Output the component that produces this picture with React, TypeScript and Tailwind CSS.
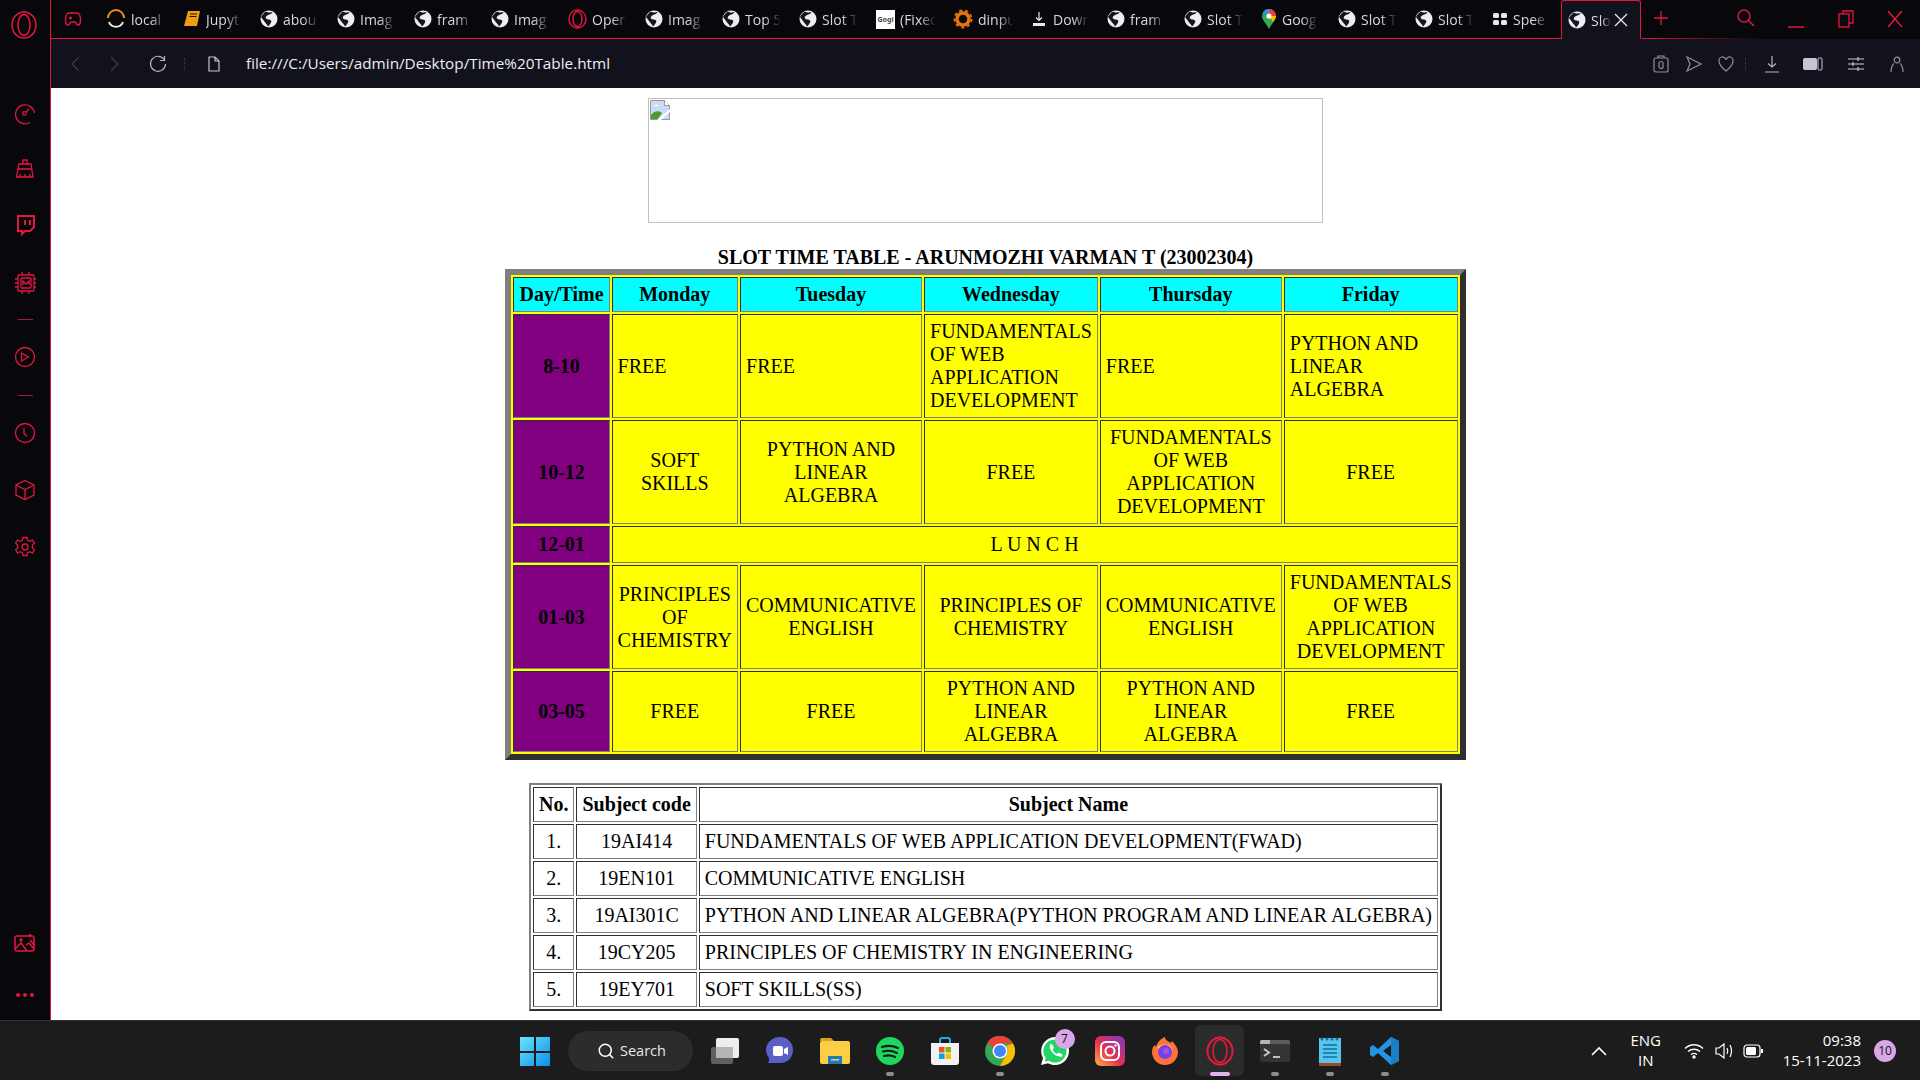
import React from 'react';
import { Search } from 'lucide-react';

const RED = '#e3173e';

const serif = "font-['Liberation_Serif','Times_New_Roman',serif] text-[20px] leading-[23px] text-black";
const ui = "font-['Open_Sans','Noto_Sans',sans-serif]";
const fade = '[mask-image:linear-gradient(to_right,black_55%,transparent)]';

const Globe = () => <svg width="18" height="18" viewBox="0 0 18 18" className="shrink-0">
    <circle cx="9" cy="9" r="8.5" fill="#eceef2" />
    <path d="M6 1.5c2 1.5 5 1 6.5.5-.5 2-3 2-4.5 3S5 7 6 8.5s4 .5 5 2-1 4-3 6C7 14 5 13 4 11S1.5 8 1 7c1-2 3-4.5 5-5.500z" fill="#14141c" />
</svg>;

const tabs: { icon: string, label: string }[] = [
    { icon: 'local', label: 'local' },
    { icon: 'jupyter', label: 'Jupyt' },
    { icon: 'globe', label: 'abou' },
    { icon: 'globe', label: 'Imag' },
    { icon: 'globe', label: 'fram' },
    { icon: 'globe', label: 'Imag' },
    { icon: 'opera', label: 'Oper' },
    { icon: 'globe', label: 'Imag' },
    { icon: 'globe', label: 'Top 5' },
    { icon: 'globe', label: 'Slot T' },
    { icon: 'gogi', label: '(Fixed' },
    { icon: 'gear', label: 'dinpu' },
    { icon: 'down', label: 'Dowr' },
    { icon: 'globe', label: 'fram' },
    { icon: 'globe', label: 'Slot T' },
    { icon: 'maps', label: 'Goog' },
    { icon: 'globe', label: 'Slot T' },
    { icon: 'globe', label: 'Slot T' },
    { icon: 'speed', label: 'Spee' },
];

const TabIcon = ({ icon }: { icon: string }) => {
    switch (icon) {
        case 'local':
            return <svg width="20" height="20" viewBox="0 0 20 20" fill="none" stroke="#f08a24" strokeWidth="2" className="shrink-0"><path d="M2 9a8 8 0 0 1 16 0" /><path d="M3 13a7.5 7.5 0 0 0 14 0" stroke="#e8e8e8" /></svg>;
        case 'jupyter':
            return <svg width="18" height="18" viewBox="0 0 18 18" className="shrink-0"><path d="M5 1h12l-3 15H1z" fill="#f39c12" /><path d="M7 4h7M6.500 6.500h7" stroke="#141414" strokeWidth="1" /></svg>;
        case 'opera':
            return <svg width="19" height="20" viewBox="0 0 19 20" fill="none" stroke={RED} strokeWidth="1.400" className="shrink-0"><ellipse cx="9.500" cy="10" rx="8.500" ry="9" /><ellipse cx="9.500" cy="10" rx="4.500" ry="7.500" /></svg>;
        case 'gogi':
            return <div className="w-[19px] h-[19px] bg-white text-[7px] leading-[7px] text-center text-[#444] font-bold flex items-center justify-center shrink-0">Gogi</div>;
        case 'gear':
            return <svg width="20" height="20" viewBox="0 0 20 20" fill="none" className="shrink-0"><circle cx="10" cy="10" r="6" stroke="#e8720c" strokeWidth="3.500" /><circle cx="10" cy="10" r="8.500" stroke="#e8720c" strokeWidth="2" strokeDasharray="3 3" /></svg>;
        case 'down':
            return <svg width="18" height="18" viewBox="0 0 18 18" fill="none" stroke="#e8e8ec" strokeWidth="1.200" className="shrink-0"><path d="M9 2v8M6 7.500 9 10.500l3-3" /><path d="M3 14.500h12" strokeWidth="3" /></svg>;
        case 'maps':
            return <svg width="16" height="20" viewBox="0 0 16 20" className="shrink-0"><path d="M8 0a7 7 0 0 1 7 7c0 4-4 7-7 13C5 14 1 11 1 7a7 7 0 0 1 7-7z" fill="#34a853" /><path d="M2 3a7 7 0 0 1 6-3v7z" fill="#4285f4" /><path d="M8 0a7 7 0 0 1 7 7H8z" fill="#ea4335" /><path d="M15 7c0 2-1.500 4-3 6L8 7z" fill="#fbbc04" /><circle cx="8" cy="7" r="2.600" fill="#fff" /></svg>;
        case 'speed':
            return <svg width="16" height="16" viewBox="0 0 16 16" fill="#e8e8ec" className="shrink-0"><rect x="1" y="2" width="6" height="5" rx="1.500" /><rect x="9" y="2" width="6" height="5" rx="1.500" /><rect x="1" y="9" width="6" height="5" rx="1.500" /><rect x="9" y="9" width="6" height="5" rx="1.500" /></svg>;
        default:
            return <Globe />;
    }
};

const Tab = ({ icon, label }: { icon: string, label: string }) => <div className="w-[77px] h-[38px] shrink-0 flex items-center gap-[5px] pl-[4px]">
    <TabIcon icon={icon} />
    <div className={`${ui} ${fade} text-[14px] text-[#d8d8dc] w-[36px] whitespace-nowrap`}>{label}</div>
</div>;

const railIcon = { width: 24, height: 24, viewBox: '0 0 24 24', fill: 'none', stroke: RED, strokeWidth: 1.300 };

const Rail = () => <div className="w-[51px] shrink-0 flex flex-col items-center bg-[#07070c] border-r border-[#e3173e]">
    <svg width="30" height="32" viewBox="0 0 30 32" fill="none" stroke={RED} strokeWidth="1.500" className="mt-[9px]"><ellipse cx="14" cy="16" rx="12" ry="13" /><ellipse cx="14" cy="16" rx="6" ry="10.500" /></svg>
    <div className="mt-[60px] flex flex-col items-center">
        <svg {...railIcon}><path d="M17 21.500A9.500 9.500 0 1 1 21.500 12" /><circle cx="11.500" cy="12.500" r="1.800" /><path d="M13 11l3-3" /><path d="M21 15v.01M20 18v.01" /></svg>
        <svg {...railIcon} className="mt-[32px]"><path d="M10 7V3h4v4M6 7h12l2 13H3.500z" /><path d="M7 20v-3M12 20v-3M17 20v-3M5 12h14" /></svg>
        <svg {...railIcon} strokeWidth={2} className="mt-[32px]"><path d="M5 3h16v11l-4 4h-5l-3 3v-3H5z" /><path d="M12 7v5M17 7v5" /></svg>
        <svg {...railIcon} className="mt-[34px]"><rect x="5" y="4" width="16" height="16" rx="1" /><rect x="8" y="7" width="10" height="10" rx="1" /><path d="M10 14v-4l3 3 3-3v4M2 8h3M2 12h3M2 16h3M21 8h2M21 12h2M21 16h2M9 1v3M16 1v3M9 20v3M16 20v3" /></svg>
        <div className="w-[15px] h-px bg-[#b5143a] mt-[24px]" />
        <svg {...railIcon} className="mt-[25px]"><circle cx="12" cy="12" r="9.500" /><path d="M8.500 8l7 4-7 4z" /></svg>
        <div className="w-[15px] h-px bg-[#b5143a] mt-[26px]" />
        <svg {...railIcon} className="mt-[25px]"><circle cx="12" cy="12" r="9.500" /><path d="M11 7v5.500l3 3" /></svg>
        <svg {...railIcon} className="mt-[33px]"><path d="M12 2.500l9 4.500v10l-9 4.500L3 17V7zM3 7l9 4.500L21 7M12 11.500v10" /></svg>
        <svg {...railIcon} className="mt-[33px]"><circle cx="12" cy="12" r="3" /><path d="M10 2.500h4l.6 2.800 2.300 1 2.500-1.500 2 3.400-2 1.900v2.800l2 1.900-2 3.400-2.500-1.500-2.300 1-.6 2.800h-4l-.6-2.800-2.300-1-2.500 1.500-2-3.400 2-1.900v-2.800l-2-1.900 2-3.400 2.500 1.500 2.300-1z" /></svg>
    </div>
    <div className="mt-auto mb-[23px] flex flex-col items-center">
        <svg {...railIcon} strokeWidth={1.500}><rect x="2" y="5" width="19" height="15" rx="2" /><circle cx="8" cy="9" r="1" fill={RED} /><path d="M2 18l6-6 6 8M13 14l3-2 5 6M17 9l5 6M17 3v3M15.500 4.500h3" /></svg>
        <div className="flex gap-[3px] mt-[38px]">
            <div className="w-[4px] h-[4px] rounded-full bg-[#e3173e]" />
            <div className="w-[4px] h-[4px] rounded-full bg-[#e3173e]" />
            <div className="w-[4px] h-[4px] rounded-full bg-[#e3173e]" />
        </div>
    </div>
</div>;

const TabStrip = () => <div className="h-[39px] shrink-0 flex items-start bg-[#07070c] relative">
    <div className="w-[51px] h-[38px] shrink-0 flex items-center pl-[13px]">
        <svg width="18" height="18" viewBox="0 0 18 18" fill="none" stroke={RED} strokeWidth="1.500"><path d="M5 3h8c2 0 3.500 3 3.500 7 0 3-1 5-2.500 5s-2-3-3-3H7c-1 0-1.500 3-3 3s-2.500-2-2.500-5c0-4 1.500-7 3.500-7z" /><path d="M5 8h3M6.500 6.500v3" /></svg>
    </div>
    {tabs.map((t, i) => <Tab key={i} icon={t.icon} label={t.label} />)}
    <div className="w-[80px] h-[39px] -ml-[4px] shrink-0 bg-[#12121c] border-t border-x border-[#e3173e] rounded-t-[3px] flex items-center pl-[6px] relative z-10">
        <Globe />
        <div className={`${ui} ${fade} text-[14px] text-[#d8d8dc] w-[20px] ml-[5px] mr-[3px]`}>Slo</div>
        <svg width="14" height="14" viewBox="0 0 14 14" stroke="#e8e8ec" strokeWidth="1.300"><path d="M1 1l12 12M13 1L1 13" /></svg>
    </div>
    <svg width="16" height="16" viewBox="0 0 16 16" stroke={RED} strokeWidth="1.300" className="ml-[12px] mt-[10px] shrink-0"><path d="M8 1v14M1 8h14" /></svg>
    <div className="ml-auto flex items-start">
        <svg width="20" height="20" viewBox="0 0 20 20" fill="none" stroke={RED} strokeWidth="1.500" className="mt-[8px]"><circle cx="8" cy="8" r="6" /><path d="M12.500 12.500 18 18" /></svg>
        <svg width="16" height="16" viewBox="0 0 16 16" stroke={RED} strokeWidth="1.500" className="ml-[32px] mt-[12px]"><path d="M0 15h16" /></svg>
        <svg width="16" height="18" viewBox="0 0 16 18" fill="none" stroke={RED} strokeWidth="1.300" className="ml-[34px] mt-[10px]"><rect x="1" y="4" width="10" height="13" /><path d="M5 4V1h10v12h-4" /></svg>
        <svg width="18" height="18" viewBox="0 0 18 18" stroke={RED} strokeWidth="1.500" className="ml-[32px] mr-[16px] mt-[10px]"><path d="M2 1l14 16M16 1L2 17" /></svg>
    </div>
    <div className="absolute left-0 w-[1512px] bottom-0 h-px bg-[#e3173e]" />
    <div className="absolute left-[1591px] w-[120px] bottom-0 h-px bg-gradient-to-r from-[#e3173e] to-transparent" />
</div>;

const toolIcon = { fill: 'none', stroke: '#8f8f9e', strokeWidth: 1.200 };

const AddressBar = () => <div className="h-[49px] shrink-0 bg-[#12121c] flex items-center">
    <svg width="10" height="16" viewBox="0 0 10 16" {...toolIcon} stroke="#3d3d49" className="ml-[19px]"><path d="M9 1 2 8l7 7" /></svg>
    <svg width="10" height="16" viewBox="0 0 10 16" {...toolIcon} stroke="#3d3d49" className="ml-[30px]"><path d="M1 1l7 7-7 7" /></svg>
    <svg width="18" height="18" viewBox="0 0 18 18" {...toolIcon} stroke="#b5b5c0" className="ml-[29px]"><path d="M15.500 5A7.500 7.500 0 1 0 16.500 9M15.500 1v4.500H11" /></svg>
    <div className="w-px h-[12px] ml-[17px] border-l border-dotted border-[#3d3d49]" />
    <svg width="14" height="16" viewBox="0 0 14 16" {...toolIcon} stroke="#c5c5ce" className="ml-[22px]"><path d="M2 1h6l4 4v10H2zM8 1v4h4" /></svg>
    <div className={`${ui} text-[15.3px] text-[#eeeef2] ml-[25px] whitespace-nowrap`}>file:///C:/Users/admin/Desktop/Time%20Table.html</div>
    <div className="ml-auto flex items-center">
        <svg width="18" height="20" viewBox="0 0 18 20" {...toolIcon}><rect x="2" y="4" width="14" height="14" rx="2" /><path d="M6 4V2h6v2" /><rect x="7" y="7.500" width="4" height="7" rx="2" /></svg>
        <svg width="18" height="18" viewBox="0 0 18 18" {...toolIcon} className="ml-[15px]"><path d="M2 2l14 7-14 7 3-7z" /></svg>
        <svg width="18" height="18" viewBox="0 0 18 18" {...toolIcon} className="ml-[14px]"><path d="M9 16C4 12 2 9 2 6a3.500 3.500 0 0 1 7-1 3.500 3.500 0 0 1 7 1c0 3-2 6-7 10z" /></svg>
        <div className="w-px h-[12px] ml-[10px] border-l border-dotted border-[#3d3d49]" />
        <svg width="18" height="20" viewBox="0 0 18 20" {...toolIcon} stroke="#b5b5c0" className="ml-[17px]"><path d="M9 2v11M5 9.500 9 13l4-3.500M2 18h14" /></svg>
        <svg width="20" height="14" viewBox="0 0 20 14" className="ml-[22px]"><rect x="0" y="1" width="14" height="12" rx="2" fill="#c9c5d6" /><rect x="15" y="1" width="4" height="12" rx="1" fill="none" stroke="#c9c5d6" /></svg>
        <svg width="18" height="18" viewBox="0 0 18 18" {...toolIcon} stroke="#c9c9d2" className="ml-[24px]"><path d="M1 4h16M1 9h16M1 14h16M11 2v4M6 7v4M11 12v4" /></svg>
        <svg width="14" height="18" viewBox="0 0 14 18" {...toolIcon} className="ml-[25px] mr-[16px]"><circle cx="7" cy="5" r="2.800" /><path d="M1 17c0-5 2-8 3-8.500M13 17c0-5-2-8-3-8.500" /></svg>
    </div>
</div>;

const cellBorder = 'border border-t-[#303030] border-l-[#303030] border-b-[#808080] border-r-[#808080] p-[5px]';

const Th = ({ children }: { children: React.ReactNode }) => <th className={`${cellBorder} ${serif} font-bold bg-[#00ffff]`}>{children}</th>;

const Slot = ({ children, left }: { children: React.ReactNode, left?: boolean }) => <td className={`${cellBorder} ${serif} bg-[#ffff00] ${left ? 'text-left' : 'text-center'}`}>{children}</td>;

const Time = ({ children }: { children: string }) => <td className={`${cellBorder} ${serif} font-bold bg-[#800080] text-center`}>{children}</td>;

const SlotTable = () => <table className="mx-auto border-separate border-spacing-[2px] bg-[#ffff00] border-[6px] border-t-[#808080] border-l-[#808080] border-b-[#2f2f2f] border-r-[#2f2f2f]">
    <tbody>
        <tr>
            <Th>Day/Time</Th><Th>Monday</Th><Th>Tuesday</Th><Th>Wednesday</Th><Th>Thursday</Th><Th>Friday</Th>
        </tr>
        <tr>
            <Time>8-10</Time>
            <Slot left>FREE</Slot>
            <Slot left>FREE</Slot>
            <Slot left>FUNDAMENTALS<br />OF WEB<br />APPLICATION<br />DEVELOPMENT</Slot>
            <Slot left>FREE</Slot>
            <Slot left>PYTHON AND<br />LINEAR<br />ALGEBRA</Slot>
        </tr>
        <tr>
            <Time>10-12</Time>
            <Slot>SOFT<br />SKILLS</Slot>
            <Slot>PYTHON AND<br />LINEAR<br />ALGEBRA</Slot>
            <Slot>FREE</Slot>
            <Slot>FUNDAMENTALS<br />OF WEB<br />APPLICATION<br />DEVELOPMENT</Slot>
            <Slot>FREE</Slot>
        </tr>
        <tr className="h-[37px]">
            <Time>12-01</Time>
            <td colSpan={5} className={`${cellBorder} ${serif} bg-[#ffff00] text-center`}>L U N C H</td>
        </tr>
        <tr>
            <Time>01-03</Time>
            <Slot>PRINCIPLES<br />OF<br />CHEMISTRY</Slot>
            <Slot>COMMUNICATIVE<br />ENGLISH</Slot>
            <Slot>PRINCIPLES OF<br />CHEMISTRY</Slot>
            <Slot>COMMUNICATIVE<br />ENGLISH</Slot>
            <Slot>FUNDAMENTALS<br />OF WEB<br />APPLICATION<br />DEVELOPMENT</Slot>
        </tr>
        <tr>
            <Time>03-05</Time>
            <Slot>FREE</Slot>
            <Slot>FREE</Slot>
            <Slot>PYTHON AND<br />LINEAR<br />ALGEBRA</Slot>
            <Slot>PYTHON AND<br />LINEAR<br />ALGEBRA</Slot>
            <Slot>FREE</Slot>
        </tr>
    </tbody>
</table>;

const subjects = [
    ['1.', '19AI414', 'FUNDAMENTALS OF WEB APPLICATION DEVELOPMENT(FWAD)'],
    ['2.', '19EN101', 'COMMUNICATIVE ENGLISH'],
    ['3.', '19AI301C', 'PYTHON AND LINEAR ALGEBRA(PYTHON PROGRAM AND LINEAR ALGEBRA)'],
    ['4.', '19CY205', 'PRINCIPLES OF CHEMISTRY IN ENGINEERING'],
    ['5.', '19EY701', 'SOFT SKILLS(SS)'],
];

const SubjectTable = () => <table className="mx-auto mt-[23px] border-separate border-spacing-[2px] border-2 border-t-[#808080] border-l-[#808080] border-b-[#2f2f2f] border-r-[#2f2f2f]">
    <tbody>
        <tr>
            <th className={`${cellBorder} ${serif} font-bold`}>No.</th>
            <th className={`${cellBorder} ${serif} font-bold`}>Subject code</th>
            <th className={`${cellBorder} ${serif} font-bold`}>Subject Name</th>
        </tr>
        { subjects.map(row => <tr key={row[0]}>
            <td className={`${cellBorder} ${serif} text-center`}>{row[0]}</td>
            <td className={`${cellBorder} ${serif} text-center`}>{row[1]}</td>
            <td className={`${cellBorder} ${serif}`}>{row[2]}</td>
        </tr> )}
    </tbody>
</table>;

const Page = () => <div className="flex-1 bg-white overflow-hidden">
    <div className="w-[675px] h-[125px] mx-auto mt-[10px] border border-[#c0c0c0] p-[1px]">
        <svg width="20" height="20" viewBox="0 0 20 20" className="block">
            <path d="M.5.5h14l5 5v14H.5z" fill="#c9dcf6" stroke="#9a9a9a" />
            <path d="M14.5.5v5h5" fill="#fff" stroke="#9a9a9a" />
            <path d="M4 6c1-2 4-2 5 0z" fill="#fff" />
            <path d="M1 19v-4c3-4 7-5 11-2l-4 6z" fill="#4f9a2e" />
            <path d="M7 20 20 9v3L11 20z" fill="#fff" />
        </svg>
    </div>
    <div className={`${serif} font-bold text-center mt-[23px]`}>SLOT TIME TABLE - ARUNMOZHI VARMAN T (23002304)</div>
    <SlotTable />
    <SubjectTable />
</div>;

const Dot = () => <div className="absolute left-1/2 -translate-x-1/2 bottom-[5px] w-[8px] h-[4px] rounded-full bg-[#8d8d8d]" />;

const App_ = ({ children, dot, active }: { children: React.ReactNode, dot?: boolean, active?: boolean }) => <div className={`w-[55px] h-[60px] shrink-0 flex items-center justify-center relative ${active ? 'before:absolute before:inset-x-[3px] before:top-[4px] before:bottom-[5px] before:rounded-md before:bg-[#2b2b2b]' : ''}`}>
    <div className="relative flex">{children}</div>
    { dot ? <Dot /> : null }
    { active ? <div className="absolute left-1/2 -translate-x-1/2 bottom-[5px] w-[20px] h-[4px] rounded-full bg-[#e4b3ef]" /> : null }
</div>;

const Taskbar = () => <div className="h-[60px] shrink-0 bg-[#1c1c1c] border-t border-[#2e2e2e] flex items-center relative">
    <div className="ml-[519px] flex items-center">
        <svg width="32" height="30" viewBox="0 0 32 30"><defs><linearGradient id="w" x1="0" y1="0" x2="1" y2="1"><stop offset="0" stopColor="#6ce4ff" /><stop offset="1" stopColor="#0a8fe8" /></linearGradient></defs><path d="M1 1h14v14H1zM17 1h14v14H17zM1 17h14v13H1zM17 17h14v13H17z" fill="url(#w)" /></svg>
        <div className={`ml-[17px] w-[125px] h-[40px] rounded-full bg-[#2c2c2c] flex items-center gap-[5px] pl-[29px] text-[#e8e8e8] ${ui} text-[14.5px]`}>
            <Search size={18} color="#fff" />
            Search
        </div>
    </div>
    <div className="ml-[4px] flex">
        <App_><svg width="30" height="28" viewBox="0 0 30 28"><rect x="1" y="10" width="22" height="17" rx="2" fill="#5f5f5f" /><rect x="6" y="1" width="23" height="20" rx="2" fill="#eeeeee" /><rect x="6" y="10" width="17" height="11" fill="#b5b5b5" /></svg></App_>
        <App_><svg width="30" height="30" viewBox="0 0 30 30"><path d="M15 1c8 0 13 6 13 13s-5 13-13 13H3c1-1 1-3 1-5C2 19 1 17 1 14 1 7 7 1 15 1z" fill="#5a5fc7" /><rect x="8" y="10" width="10" height="10" rx="2" fill="#fff" /><path d="M19 13l4-2v8l-4-2z" fill="#fff" /></svg></App_>
        <App_><svg width="30" height="28" viewBox="0 0 30 28"><path d="M0 3a2 2 0 0 1 2-2h9l3 3h-14z" fill="#dba21c" /><rect x="0" y="4" width="30" height="23" rx="2" fill="#fbce46" /><rect x="8" y="19" width="14" height="8" fill="#1b7cc2" /><rect x="11" y="22" width="8" height="1.500" fill="#fbce46" /></svg></App_>
        <App_ dot><svg width="28" height="28" viewBox="0 0 28 28" fill="none"><circle cx="14" cy="14" r="14" fill="#1ed760" /><path d="M6 10c6-2 11-1.500 16 1M7 14.500c5-1.500 9-1 14 1.500M8 19c4-1 8-.5 11 1" stroke="#1c1c1c" strokeWidth="2.200" strokeLinecap="round" /></svg></App_>
        <App_><svg width="30" height="30" viewBox="0 0 30 30"><path d="M10 8V4a2 2 0 0 1 2-2h6a2 2 0 0 1 2 2v4" fill="none" stroke="#28a8ea" strokeWidth="2" /><path d="M1 7h28v19a3 3 0 0 1-3 3H4a3 3 0 0 1-3-3z" fill="#f2f2f2" /><rect x="9" y="11" width="5.500" height="5.500" fill="#f25022" /><rect x="15.500" y="11" width="5.500" height="5.500" fill="#7fba00" /><rect x="9" y="17.500" width="5.500" height="5.500" fill="#00a4ef" /><rect x="15.500" y="17.500" width="5.500" height="5.500" fill="#ffb900" /></svg></App_>
        <App_ dot><svg width="30" height="30" viewBox="0 0 30 30"><circle cx="15" cy="15" r="15" fill="#34a853" /><path d="M15 0a15 15 0 0 1 13 7.500H15a7.500 7.500 0 0 0-7 4.700L2.500 6A15 15 0 0 1 15 0z" fill="#ea4335" /><path d="M28 7.500A15 15 0 0 1 15 30l6.500-11.300A7.500 7.500 0 0 0 21 10z" fill="#fbbc04" /><circle cx="15" cy="15" r="7.500" fill="#fff" /><circle cx="15" cy="15" r="6" fill="#4285f4" /></svg></App_>
        <App_><svg width="30" height="30" viewBox="0 0 30 30"><path d="M15 1a14 14 0 0 1 0 28c-2.500 0-5-.7-7-1.800L1 29l2-7A14 14 0 0 1 15 1z" fill="#fff" /><path d="M15 3.500a11.500 11.500 0 0 1 0 23c-2.300 0-4.500-.7-6.300-1.800l-4 1 1-3.800A11.500 11.500 0 0 1 15 3.500z" fill="#25d366" /><path d="M10 8.500l2-.5 2 4-1.500 1.500c1 2 2.500 3.500 4.500 4.500l1.500-1.500 4 2-.5 2c-6 1.500-14-6.500-12-12z" fill="#fff" /></svg><div className={`absolute -right-[5px] -top-[7px] w-[20px] h-[20px] rounded-full bg-[#d9a7e8] text-[#111] ${ui} text-[12px] leading-[20px] text-center`}>7</div></App_>
        <App_><svg width="30" height="30" viewBox="0 0 30 30" fill="none"><defs><linearGradient id="ig" x1="0" y1="1" x2="1" y2="0"><stop offset="0" stopColor="#fdb347" /><stop offset=".45" stopColor="#e8304f" /><stop offset="1" stopColor="#7a35c8" /></linearGradient></defs><rect width="30" height="30" rx="6" fill="url(#ig)" /><rect x="6" y="6" width="18" height="18" rx="5" stroke="#fff" strokeWidth="2" /><circle cx="15" cy="15" r="4.500" stroke="#fff" strokeWidth="2" /><circle cx="20.500" cy="9.500" r="1.200" fill="#fff" /></svg></App_>
        <App_><svg width="28" height="30" viewBox="0 0 28 30"><path d="M14 29A13 13 0 0 1 2 11l2-2 1 2c1-4 4-8 9-10 0 3 3 4 6 6l1-2c4 4 6 8 6 11a13 13 0 0 1-13 13z" fill="#ff7139" /><path d="M6 11c3-3 7-3 12-2 2 1 3 3 3 5H8z" fill="#ffbd4f" /><circle cx="14" cy="16" r="7" fill="#7542e5" /><circle cx="15" cy="15" r="3" fill="#b44ee0" /></svg></App_>
        <App_ active><svg width="28" height="30" viewBox="0 0 28 30" fill="none" stroke="#e8193f" strokeWidth="2"><ellipse cx="14" cy="15" rx="12.500" ry="13.500" /><ellipse cx="14" cy="15" rx="7" ry="11.500" strokeWidth="1.500" /></svg></App_>
        <App_ dot><svg width="30" height="22" viewBox="0 0 30 22"><rect width="30" height="22" rx="2" fill="#343434" /><path d="M2 0h26a2 2 0 0 1 2 2v2H0V2a2 2 0 0 1 2-2z" fill="#5c5c5c" /><path d="M2 0h8v4H0V2a2 2 0 0 1 2-2z" fill="#b5b5b5" /><path d="M4 9l5 3.500L4 16" fill="none" stroke="#c5c5c5" strokeWidth="2" /><path d="M13 17h7" stroke="#eee" strokeWidth="1.500" /></svg></App_>
        <App_ dot><svg width="22" height="30" viewBox="0 0 22 30"><rect x="0" y="2" width="22" height="28" rx="1" fill="#9a4a1c" /><rect x="0" y="2" width="22" height="25" fill="#58c5ee" /><path d="M4 9h14M4 13h14M4 17h14M4 21h14" stroke="#0f6f95" strokeWidth="1.500" /><path d="M3 3v.01M8 3v.01M13 3v.01M18 3v.01" stroke="#0f6f95" strokeWidth="3" strokeLinecap="round" /></svg></App_>
        <App_ dot><svg width="30" height="30" viewBox="0 0 30 30"><path d="M21 1l8 4v20l-8 4L8 17l-5 4-3-2v-8l3-2 5 4z" fill="#2493e0" /><path d="M21 1v28l8-4V5z" fill="#1b7fc8" /><path d="M21 9l-8 6 8 6z" fill="#1c1c1c" /></svg></App_>
    </div>
    <div className={`ml-auto flex items-center text-white ${ui}`}>
        <svg width="16" height="10" viewBox="0 0 16 10" fill="none" stroke="#fff" strokeWidth="1.600"><path d="M1 9l7-7 7 7" /></svg>
        <div className="ml-[23px] w-[32px] text-center text-[15px] leading-[20px] mb-[2px]">ENG<br />IN</div>
        <svg width="20" height="16" viewBox="0 0 20 16" fill="none" stroke="#fff" strokeWidth="1.400" className="ml-[22px]"><path d="M1 5.500c5-5 13-5 18 0M4 8.500c3.500-3 8.500-3 12 0M7 11.500c2-1.500 4-1.500 6 0" /><circle cx="10" cy="14" r="1" fill="#fff" /></svg>
        <svg width="20" height="18" viewBox="0 0 20 18" fill="none" stroke="#fff" strokeWidth="1.200" className="ml-[11px]"><path d="M1 6h3l5-4v14l-5-4H1zM12 6c1 2 1 4 0 6M15 3c2 4 2 8 0 12" /></svg>
        <svg width="20" height="14" viewBox="0 0 20 14" fill="none" className="ml-[8px]"><rect x="1" y="1" width="16" height="12" rx="3" stroke="#fff" strokeWidth="1.200" /><rect x="3" y="3" width="10" height="8" rx="1.500" fill="#fff" /><rect x="18" y="5" width="2" height="4" fill="#fff" /></svg>
        <div className="ml-[20px] text-right text-[15px] leading-[20px] mb-[2px]">09:38<br />15-11-2023</div>
        <div className="ml-[13px] mr-[24px] w-[22px] h-[22px] rounded-full bg-[#d9a7e8] text-[#111] text-[12px] leading-[22px] text-center">10</div>
    </div>
</div>;

export default function App() {
    return <div className="w-[1920px] h-[1080px] flex flex-col overflow-hidden bg-[#07070c]">
        <div className="flex-1 flex min-h-0">
            <Rail />
            <div className="flex-1 min-w-0 flex flex-col">
                <TabStrip />
                <AddressBar />
                <Page />
            </div>
        </div>
        <Taskbar />
    </div>;
}
